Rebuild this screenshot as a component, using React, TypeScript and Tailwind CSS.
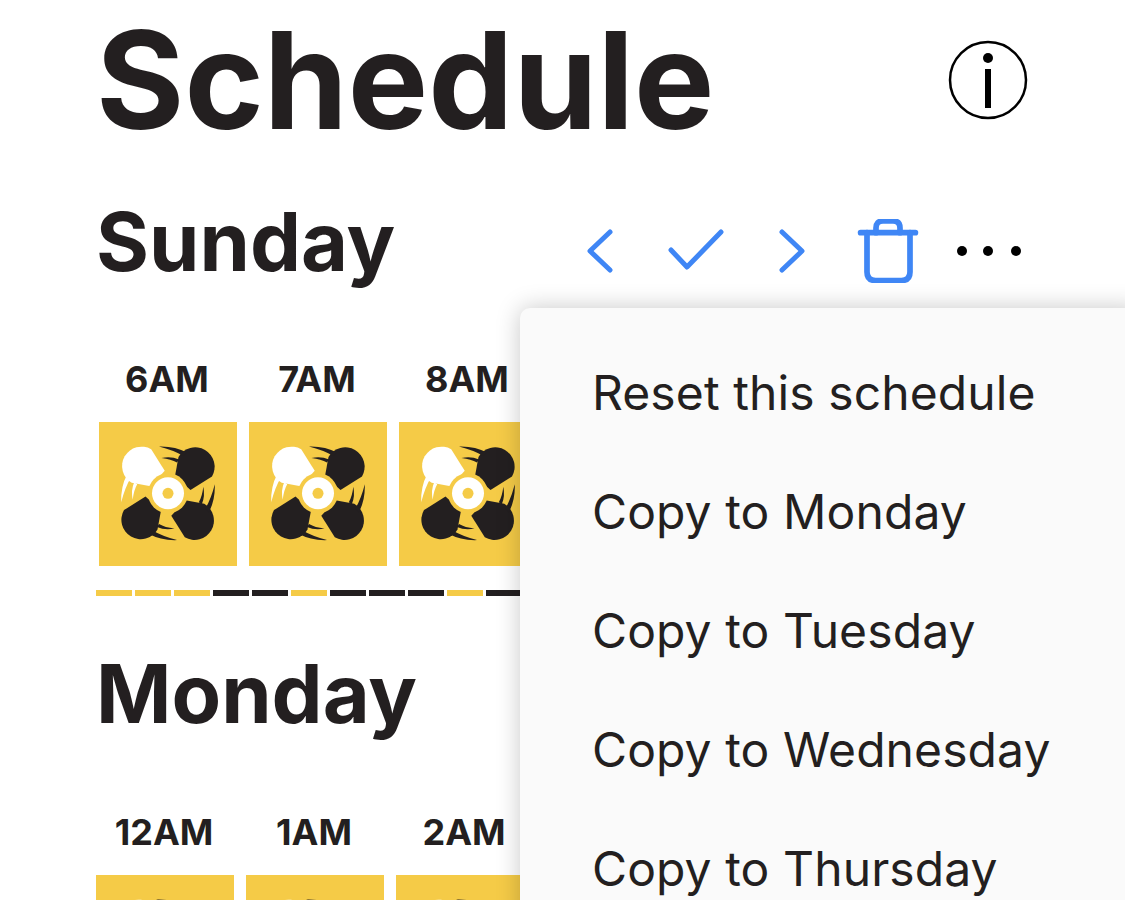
const sunday = ["6AM", "7AM", "8AM"];
const monday = ["12AM", "1AM", "2AM"];
const bars = [1, 1, 1, 0, 0, 1, 0, 0, 0, 1, 0, 0, 1, 0];
const menuItems = [
  "Reset this schedule",
  "Copy to Monday",
  "Copy to Tuesday",
  "Copy to Wednesday",
  "Copy to Thursday",
];

function Blade({ fill, angle }: { fill: string; angle: number }) {
  return (
    <g transform={`rotate(${angle} 69 71.3)`} fill={fill}>
      <path d="M76 54 L79.5 35 A19.3 19.3 0 1 1 113 54.5 L91.5 68 Z" />
      <path d="M60 24.5 Q76 24 88 30.5 L84.5 34 Q74 28 60 24.5 Z" />
      <path d="M62.5 36 Q72 34 80 37.5 L78 40.5 Q72 37 62.5 36 Z" />
    </g>
  );
}

function FanTile() {
  return (
    <svg width="138" height="144" viewBox="0 0 138 144" className="block">
      <rect width="138" height="144" fill="#f5cb47" />
      <Blade fill="#231f20" angle={0} />
      <Blade fill="#ffffff" angle={-90} />
      <Blade fill="#231f20" angle={180} />
      <Blade fill="#231f20" angle={90} />
      <circle cx="69" cy="71.3" r="20" fill="#f5cb47" />
      <circle cx="69" cy="71.3" r="16" fill="#ffffff" />
      <circle cx="69" cy="71.3" r="5.5" fill="#f5cb47" />
    </svg>
  );
}

function HourRow({ hours, shift }: { hours: string[]; shift: string }) {
  return (
    <div className={`flex gap-3 ${shift}`}>
      {hours.map((h) => (
        <div key={h} className="w-[138px] shrink-0">
          <div className="h-[65px] pr-[2px] text-center text-[36px] leading-[44px] font-bold whitespace-nowrap">{h}</div>
          <FanTile />
        </div>
      ))}
    </div>
  );
}

export default function App() {
  return (
    <div
      className="relative h-[900px] overflow-hidden bg-white text-[#231f20]"
      style={{ fontFamily: "Inter, sans-serif" }}
    >
      <main className="pl-[96px] pr-[97px]">
        <div className="flex h-[160px] items-center justify-between">
          <h1 className="text-[135px] leading-[160px] font-bold">Schedule</h1>
          <svg width="80" height="80" viewBox="0 0 80 80" className="text-black">
            <circle cx="40" cy="40" r="38" fill="none" stroke="currentColor" strokeWidth="2.5" />
            <circle cx="40" cy="18" r="5" fill="currentColor" />
            <rect x="37" y="29" width="6" height="39" fill="currentColor" />
          </svg>
        </div>

        <div className="mt-[42px] flex h-[80px] items-start justify-between">
          <h2 className="text-[81px] leading-[80px] font-bold">Sunday</h2>
          <div className="mt-[17px] mr-[2px] flex items-center text-[#3f86f5]">
            <svg width="32" height="64" viewBox="0 0 32 64" fill="none" stroke="currentColor" strokeWidth="5" strokeLinecap="round" strokeLinejoin="round">
              <path d="M26 13 L6 32 L26 51" />
            </svg>
            <svg width="64" height="64" viewBox="0 0 64 64" fill="none" stroke="currentColor" strokeWidth="5" strokeLinecap="round" strokeLinejoin="round" className="ml-[48px]">
              <path d="M7 31 L23 48 L57 13" />
            </svg>
            <svg width="32" height="64" viewBox="0 0 32 64" fill="none" stroke="currentColor" strokeWidth="5" strokeLinecap="round" strokeLinejoin="round" className="ml-[48px]">
              <path d="M6 13 L26 32 L6 51" />
            </svg>
            <svg width="64" height="64" viewBox="0 0 64 64" fill="none" stroke="currentColor" strokeWidth="5.7" strokeLinecap="round" strokeLinejoin="round" className="ml-[48px]">
              <path d="M4.6 13.7 H59.4" />
              <path d="M11 13.7 V53 Q11 61.5 19.5 61.5 H45.5 Q54 61.5 54 53 V13.7" />
              <path d="M20 13.7 V9 Q20 2 27 2 H37 Q44 2 44 9 V13.7" />
            </svg>
            <svg width="76" height="64" viewBox="0 0 76 64" className="ml-[30px] text-black" fill="currentColor">
              <circle cx="12" cy="32" r="5" />
              <circle cx="38" cy="32" r="5" />
              <circle cx="66" cy="32" r="5" />
            </svg>
          </div>
        </div>

        <div className="mt-[75px]">
          <HourRow hours={sunday} shift="ml-[3px]" />
        </div>

        <div className="mt-[24px] flex gap-[3px]">
          {bars.map((on, i) => (
            <div key={i} className={`h-[6px] w-[36px] shrink-0 ${on ? "bg-[#f5cb47]" : "bg-[#231f20]"}`} />
          ))}
        </div>

        <h2 className="mt-[58px] h-[80px] text-[81px] leading-[80px] font-bold">Monday</h2>

        <div className="mt-[76px]">
          <HourRow hours={monday} shift="" />
        </div>
      </main>

      <div className="absolute top-[308px] left-[520px] h-[700px] w-[620px] rounded-tl-[10px] bg-[#fafafa] pt-[25px] pl-[72px] shadow-[0_0_24px_rgba(0,0,0,0.22)]">
        {menuItems.map((item) => (
          <div key={item} className="h-[119px] text-[48px] leading-[120px] font-normal tracking-[0.1px] whitespace-nowrap">
            {item}
          </div>
        ))}
      </div>
    </div>
  );
}
